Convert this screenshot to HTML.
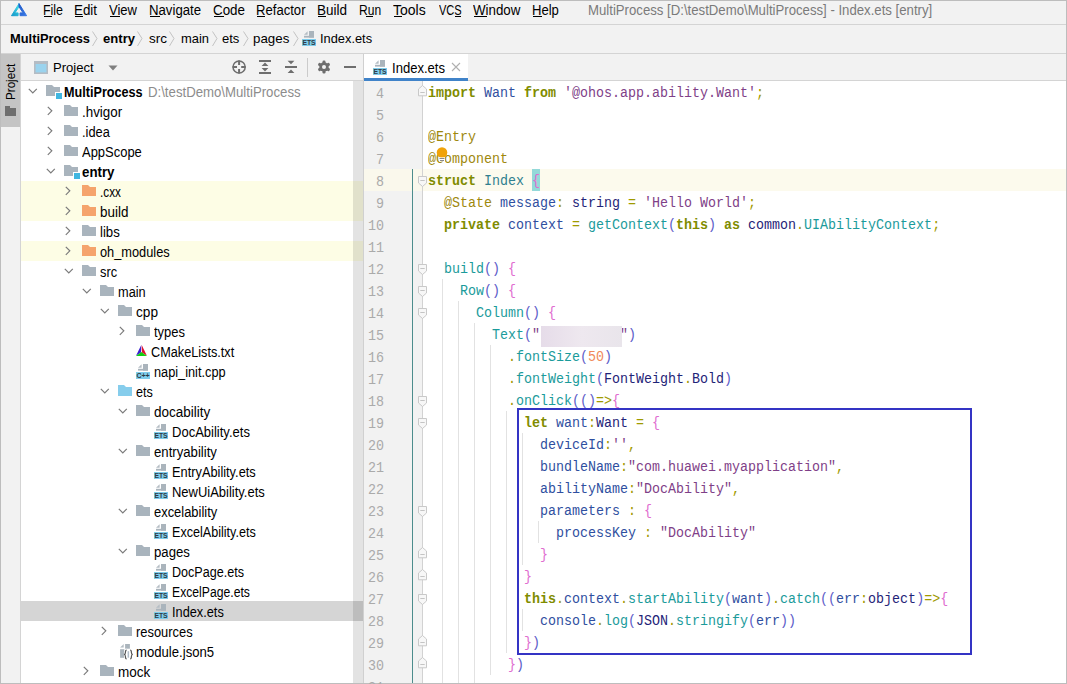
<!DOCTYPE html><html><head><meta charset="utf-8"><style>
html,body{margin:0;padding:0;}
body{width:1067px;height:684px;position:relative;overflow:hidden;background:#fff;font-family:'Liberation Sans', sans-serif;}
</style></head><body>
<div style="position:absolute;left:0px;top:0px;width:1067px;height:684px;background:#f2f2f2;"></div>
<div style="position:absolute;left:0px;top:0px;width:1067px;height:1px;background:#bdbdbd;"></div>
<div style="position:absolute;left:0px;top:0px;width:1px;height:684px;background:#bdbdbd;"></div>
<div style="position:absolute;left:1066px;top:0px;width:1px;height:684px;background:#bdbdbd;"></div>
<div style="position:absolute;left:0px;top:683px;width:1067px;height:1px;background:#bdbdbd;"></div>
<div style="position:absolute;left:1px;top:24px;width:1065px;height:1px;background:#d4d4d4;"></div>
<div style="position:absolute;left:1px;top:53px;width:1065px;height:1px;background:#d4d4d4;"></div>
<svg style="position:absolute;left:0;top:0" width="40" height="24">
<defs><linearGradient id="lg1" x1="0" y1="1" x2="0.6" y2="0"><stop offset="0" stop-color="#1296c8"/><stop offset="1" stop-color="#3fd8e6"/></linearGradient>
<linearGradient id="lg2" x1="0" y1="0" x2="1" y2="1"><stop offset="0" stop-color="#1d58c8"/><stop offset="1" stop-color="#3a7ae6"/></linearGradient></defs>
<path d="M19 3.6 L11.5 15.7 L18.1 15.7 L18.1 12.9 L14.9 12.9 L19 6.8 Z" fill="url(#lg1)" stroke="url(#lg1)" stroke-width="1" stroke-linejoin="round"/>
<path d="M19 3.6 L26.6 15.7 L20.1 15.7 L20.1 12.9 L23.1 12.9 L19 6.8 Z" fill="url(#lg2)" stroke="url(#lg2)" stroke-width="1" stroke-linejoin="round"/>
</svg>
<div style="position:absolute;left:43px;top:1.65px;font:400 14px/17px 'Liberation Sans', sans-serif;color:#000;white-space:pre;transform:scaleX(0.8864);transform-origin:0 0;">File</div>
<div style="position:absolute;left:74px;top:1.65px;font:400 14px/17px 'Liberation Sans', sans-serif;color:#000;white-space:pre;transform:scaleX(0.9534);transform-origin:0 0;">Edit</div>
<div style="position:absolute;left:109px;top:1.65px;font:400 14px/17px 'Liberation Sans', sans-serif;color:#000;white-space:pre;transform:scaleX(0.9304);transform-origin:0 0;">View</div>
<div style="position:absolute;left:148.5px;top:1.65px;font:400 14px/17px 'Liberation Sans', sans-serif;color:#000;white-space:pre;transform:scaleX(0.9427);transform-origin:0 0;">Navigate</div>
<div style="position:absolute;left:213px;top:1.65px;font:400 14px/17px 'Liberation Sans', sans-serif;color:#000;white-space:pre;transform:scaleX(0.9561);transform-origin:0 0;">Code</div>
<div style="position:absolute;left:256px;top:1.65px;font:400 14px/17px 'Liberation Sans', sans-serif;color:#000;white-space:pre;transform:scaleX(0.9353);transform-origin:0 0;">Refactor</div>
<div style="position:absolute;left:317px;top:1.65px;font:400 14px/17px 'Liberation Sans', sans-serif;color:#000;white-space:pre;transform:scaleX(0.9634);transform-origin:0 0;">Build</div>
<div style="position:absolute;left:358.7px;top:1.65px;font:400 14px/17px 'Liberation Sans', sans-serif;color:#000;white-space:pre;transform:scaleX(0.8603);transform-origin:0 0;">Run</div>
<div style="position:absolute;left:393px;top:1.65px;font:400 14px/17px 'Liberation Sans', sans-serif;color:#000;white-space:pre;transform:scaleX(1.0004);transform-origin:0 0;">Tools</div>
<div style="position:absolute;left:438.8px;top:1.65px;font:400 14px/17px 'Liberation Sans', sans-serif;color:#000;white-space:pre;transform:scaleX(0.7883);transform-origin:0 0;">VCS</div>
<div style="position:absolute;left:473.4px;top:1.65px;font:400 14px/17px 'Liberation Sans', sans-serif;color:#000;white-space:pre;transform:scaleX(0.9519);transform-origin:0 0;">Window</div>
<div style="position:absolute;left:532.4px;top:1.65px;font:400 14px/17px 'Liberation Sans', sans-serif;color:#000;white-space:pre;transform:scaleX(0.9341);transform-origin:0 0;">Help</div>
<div style="position:absolute;left:587.8px;top:1.65px;font:400 14px/17px 'Liberation Sans', sans-serif;color:#7a7a7a;white-space:pre;transform:scaleX(0.9413);transform-origin:0 0;">MultiProcess [D:\testDemo\MultiProcess] - Index.ets [entry]</div>
<div style="position:absolute;left:44px;top:16px;width:8px;height:1px;background:#000;"></div>
<div style="position:absolute;left:75px;top:16px;width:8px;height:1px;background:#000;"></div>
<div style="position:absolute;left:110px;top:16px;width:10px;height:1px;background:#000;"></div>
<div style="position:absolute;left:150px;top:16px;width:10px;height:1px;background:#000;"></div>
<div style="position:absolute;left:214px;top:16px;width:10px;height:1px;background:#000;"></div>
<div style="position:absolute;left:257px;top:16px;width:8px;height:1px;background:#000;"></div>
<div style="position:absolute;left:318px;top:16px;width:8px;height:1px;background:#000;"></div>
<div style="position:absolute;left:366px;top:16px;width:7px;height:1px;background:#000;"></div>
<div style="position:absolute;left:394px;top:16px;width:8px;height:1px;background:#000;"></div>
<div style="position:absolute;left:455px;top:16px;width:6px;height:1px;background:#000;"></div>
<div style="position:absolute;left:474px;top:16px;width:13px;height:1px;background:#000;"></div>
<div style="position:absolute;left:533px;top:16px;width:9px;height:1px;background:#000;"></div>
<div style="position:absolute;left:10px;top:31.32px;font:700 13.5px/16px 'Liberation Sans', sans-serif;color:#000;white-space:pre;transform:scaleX(0.9520);transform-origin:0 0;">MultiProcess</div>
<div style="position:absolute;left:103px;top:31.32px;font:700 13.5px/16px 'Liberation Sans', sans-serif;color:#000;white-space:pre;transform:scaleX(0.9692);transform-origin:0 0;">entry</div>
<div style="position:absolute;left:149px;top:31.32px;font:400 13.5px/16px 'Liberation Sans', sans-serif;color:#000;white-space:pre;transform:scaleX(1.0000);transform-origin:0 0;">src</div>
<div style="position:absolute;left:180.6px;top:31.32px;font:400 13.5px/16px 'Liberation Sans', sans-serif;color:#000;white-space:pre;transform:scaleX(0.9568);transform-origin:0 0;">main</div>
<div style="position:absolute;left:222.2px;top:31.32px;font:400 13.5px/16px 'Liberation Sans', sans-serif;color:#000;white-space:pre;transform:scaleX(0.9658);transform-origin:0 0;">ets</div>
<div style="position:absolute;left:253.3px;top:31.32px;font:400 13.5px/16px 'Liberation Sans', sans-serif;color:#000;white-space:pre;transform:scaleX(0.9865);transform-origin:0 0;">pages</div>
<div style="position:absolute;left:319.6px;top:31.32px;font:400 13.5px/16px 'Liberation Sans', sans-serif;color:#000;white-space:pre;transform:scaleX(0.9508);transform-origin:0 0;">Index.ets</div>
<svg style="position:absolute;left:92px;top:31px" width="6" height="16"><path d="M0.5 0.5 L5 7.5 L0.5 15" fill="none" stroke="#c3c3c3" stroke-width="1"/></svg>
<svg style="position:absolute;left:137px;top:31px" width="6" height="16"><path d="M0.5 0.5 L5 7.5 L0.5 15" fill="none" stroke="#c3c3c3" stroke-width="1"/></svg>
<svg style="position:absolute;left:169px;top:31px" width="6" height="16"><path d="M0.5 0.5 L5 7.5 L0.5 15" fill="none" stroke="#c3c3c3" stroke-width="1"/></svg>
<svg style="position:absolute;left:212px;top:31px" width="6" height="16"><path d="M0.5 0.5 L5 7.5 L0.5 15" fill="none" stroke="#c3c3c3" stroke-width="1"/></svg>
<svg style="position:absolute;left:243px;top:31px" width="6" height="16"><path d="M0.5 0.5 L5 7.5 L0.5 15" fill="none" stroke="#c3c3c3" stroke-width="1"/></svg>
<svg style="position:absolute;left:293px;top:31px" width="6" height="16"><path d="M0.5 0.5 L5 7.5 L0.5 15" fill="none" stroke="#c3c3c3" stroke-width="1"/></svg>
<svg style="position:absolute;left:302px;top:31px" width="14" height="15" viewBox="0 0 14 15">
<path d="M2 3.8 L5.6 0.2 V3.8 Z" fill="#b4bdc4"/><rect x="7" y="0" width="5" height="6.6" fill="#aab4bc"/><rect x="2" y="4.8" width="10" height="1.8" fill="#aab4bc"/>
<rect x="0" y="8" width="14" height="7" fill="#7fcdec"/>
<text x="7" y="14" font-family="Liberation Sans" font-size="6.8" font-weight="700" fill="#2f3b44" text-anchor="middle">ETS</text></svg>
<div style="position:absolute;left:1px;top:54px;width:19px;height:629px;background:#f2f2f2;"></div>
<div style="position:absolute;left:20px;top:54px;width:1px;height:629px;background:#d4d4d4;"></div>
<div style="position:absolute;left:1px;top:54px;width:19px;height:73px;background:#c4c4c4;"></div>
<div style="position:absolute;left:2.5px;top:100px;height:16px;transform:rotate(-90deg) scaleX(0.97);transform-origin:0 0;font:400 12px/16px 'Liberation Sans', sans-serif;color:#000;white-space:pre;width:40px">Project</div>
<div style="position:absolute;left:5px;top:108px;width:11px;height:8px;background:#6e6e6e;"></div>
<div style="position:absolute;left:5px;top:106px;width:5px;height:2px;background:#6e6e6e;"></div>
<div style="position:absolute;left:21px;top:80px;width:342px;height:1px;background:#d4d4d4;"></div>
<svg style="position:absolute;left:34px;top:61px" width="14" height="13"><rect x="0" y="0" width="14" height="13" fill="#b4bcc4"/><rect x="1.6" y="3" width="10.8" height="8.4" fill="#9ad3ee"/></svg>
<div style="position:absolute;left:52.5px;top:59.80px;font:400 13px/16px 'Liberation Sans', sans-serif;color:#000;white-space:pre;transform:scaleX(1.0057);transform-origin:0 0;">Project</div>
<svg style="position:absolute;left:108px;top:65px" width="10" height="6"><path d="M0.5 0.5 H9.5 L5 5.5 Z" fill="#7f7f7f"/></svg>
<svg style="position:absolute;left:230px;top:58px" width="134" height="20">
<circle cx="9.1" cy="9" r="6.1" fill="none" stroke="#6e6e6e" stroke-width="1.5"/>
<path d="M2.6 9 H7 M11.2 9 H15.6 M9.1 2.5 V6.9 M9.1 11.1 V15.5" stroke="#6e6e6e" stroke-width="2"/>
<rect x="29" y="2" width="12" height="2" fill="#6e6e6e"/><rect x="29" y="14" width="12" height="2" fill="#6e6e6e"/>
<path d="M31.6 8 L35 4.6 L38.4 8 Z M31.6 10 L35 13.4 L38.4 10 Z" fill="#6e6e6e"/>
<rect x="55" y="8" width="12" height="2" fill="#6e6e6e"/>
<path d="M57.6 2.8 H64.4 L61 6.3 Z M57.6 15 H64.4 L61 11.6 Z" fill="#6e6e6e"/>
<rect x="77" y="-1" width="1" height="20" fill="#cbcbcb"/>
<g transform="translate(94,9)" fill="#6e6e6e">
<circle r="4.7"/>
<rect x="-1.5" y="-6.5" width="3" height="13" rx="1.2"/>
<rect x="-1.5" y="-6.5" width="3" height="13" rx="1.2" transform="rotate(60)"/>
<rect x="-1.5" y="-6.5" width="3" height="13" rx="1.2" transform="rotate(120)"/>
<circle r="2" fill="#f2f2f2"/>
</g>
<rect x="114" y="8" width="12" height="2" fill="#6e6e6e"/>
</svg>
<div style="position:absolute;left:21px;top:81px;width:342px;height:602px;background:#ffffff;"></div>
<div style="position:absolute;left:21px;top:181px;width:342px;height:20px;background:#fdfde5;"></div>
<div style="position:absolute;left:21px;top:201px;width:342px;height:20px;background:#fdfde5;"></div>
<div style="position:absolute;left:21px;top:241px;width:342px;height:20px;background:#fdfde5;"></div>
<div style="position:absolute;left:21px;top:601px;width:342px;height:20px;background:#d5d5d5;"></div>
<div style="position:absolute;left:353px;top:81px;width:10px;height:602px;background:rgba(0,0,0,0.11);"></div>
<div style="position:absolute;left:363px;top:54px;width:1px;height:629px;background:#d0d0d0;"></div>
<svg style="position:absolute;left:28px;top:88px" width="10" height="6"><path d="M0.8 0.8 L4.8 4.8 L8.8 0.8" fill="none" stroke="#7a7a7a" stroke-width="1.2"/></svg>
<svg style="position:absolute;left:46px;top:85px" width="16" height="14"><path d="M0 0 H6 L8 2 H14 V11 H0 Z" fill="#a9b4bd"/><rect x="9" y="7" width="7" height="7" fill="#fff"/><rect x="10" y="8" width="6" height="6" fill="#40b6e0"/></svg>
<div style="position:absolute;left:63.8px;top:83.85px;font:700 14px/17px 'Liberation Sans', sans-serif;color:#000;white-space:pre;transform:scaleX(0.9020);transform-origin:0 0;">MultiProcess</div>
<svg style="position:absolute;left:47px;top:106px" width="6" height="10"><path d="M0.8 0.8 L4.8 4.8 L0.8 8.8" fill="none" stroke="#7a7a7a" stroke-width="1.2"/></svg>
<svg style="position:absolute;left:64px;top:105px" width="16" height="14"><path d="M0 0 H6 L8 2 H14 V11 H0 Z" fill="#a9b4bd"/></svg>
<div style="position:absolute;left:81.8px;top:103.85px;font:400 14px/17px 'Liberation Sans', sans-serif;color:#000;white-space:pre;transform:scaleX(0.9541);transform-origin:0 0;">.hvigor</div>
<svg style="position:absolute;left:47px;top:126px" width="6" height="10"><path d="M0.8 0.8 L4.8 4.8 L0.8 8.8" fill="none" stroke="#7a7a7a" stroke-width="1.2"/></svg>
<svg style="position:absolute;left:64px;top:125px" width="16" height="14"><path d="M0 0 H6 L8 2 H14 V11 H0 Z" fill="#a9b4bd"/></svg>
<div style="position:absolute;left:81.8px;top:123.85px;font:400 14px/17px 'Liberation Sans', sans-serif;color:#000;white-space:pre;transform:scaleX(0.9157);transform-origin:0 0;">.idea</div>
<svg style="position:absolute;left:47px;top:146px" width="6" height="10"><path d="M0.8 0.8 L4.8 4.8 L0.8 8.8" fill="none" stroke="#7a7a7a" stroke-width="1.2"/></svg>
<svg style="position:absolute;left:64px;top:145px" width="16" height="14"><path d="M0 0 H6 L8 2 H14 V11 H0 Z" fill="#a9b4bd"/></svg>
<div style="position:absolute;left:81.8px;top:143.85px;font:400 14px/17px 'Liberation Sans', sans-serif;color:#000;white-space:pre;transform:scaleX(0.9256);transform-origin:0 0;">AppScope</div>
<svg style="position:absolute;left:46px;top:168px" width="10" height="6"><path d="M0.8 0.8 L4.8 4.8 L8.8 0.8" fill="none" stroke="#7a7a7a" stroke-width="1.2"/></svg>
<svg style="position:absolute;left:64px;top:165px" width="16" height="14"><path d="M0 0 H6 L8 2 H14 V11 H0 Z" fill="#a9b4bd"/><rect x="9" y="7" width="7" height="7" fill="#fff"/><rect x="10" y="8" width="6" height="6" fill="#40b6e0"/></svg>
<div style="position:absolute;left:81.8px;top:163.85px;font:700 14px/17px 'Liberation Sans', sans-serif;color:#000;white-space:pre;transform:scaleX(0.9493);transform-origin:0 0;">entry</div>
<svg style="position:absolute;left:65px;top:186px" width="6" height="10"><path d="M0.8 0.8 L4.8 4.8 L0.8 8.8" fill="none" stroke="#7a7a7a" stroke-width="1.2"/></svg>
<svg style="position:absolute;left:82px;top:185px" width="16" height="14"><path d="M0 0 H6 L8 2 H14 V11 H0 Z" fill="#f5a46c"/></svg>
<div style="position:absolute;left:99.8px;top:183.85px;font:400 14px/17px 'Liberation Sans', sans-serif;color:#000;white-space:pre;transform:scaleX(0.8397);transform-origin:0 0;">.cxx</div>
<svg style="position:absolute;left:65px;top:206px" width="6" height="10"><path d="M0.8 0.8 L4.8 4.8 L0.8 8.8" fill="none" stroke="#7a7a7a" stroke-width="1.2"/></svg>
<svg style="position:absolute;left:82px;top:205px" width="16" height="14"><path d="M0 0 H6 L8 2 H14 V11 H0 Z" fill="#f5a46c"/></svg>
<div style="position:absolute;left:99.8px;top:203.85px;font:400 14px/17px 'Liberation Sans', sans-serif;color:#000;white-space:pre;transform:scaleX(0.9597);transform-origin:0 0;">build</div>
<svg style="position:absolute;left:65px;top:226px" width="6" height="10"><path d="M0.8 0.8 L4.8 4.8 L0.8 8.8" fill="none" stroke="#7a7a7a" stroke-width="1.2"/></svg>
<svg style="position:absolute;left:82px;top:225px" width="16" height="14"><path d="M0 0 H6 L8 2 H14 V11 H0 Z" fill="#a9b4bd"/></svg>
<div style="position:absolute;left:99.8px;top:223.85px;font:400 14px/17px 'Liberation Sans', sans-serif;color:#000;white-space:pre;transform:scaleX(0.9422);transform-origin:0 0;">libs</div>
<svg style="position:absolute;left:65px;top:246px" width="6" height="10"><path d="M0.8 0.8 L4.8 4.8 L0.8 8.8" fill="none" stroke="#7a7a7a" stroke-width="1.2"/></svg>
<svg style="position:absolute;left:82px;top:245px" width="16" height="14"><path d="M0 0 H6 L8 2 H14 V11 H0 Z" fill="#f5a46c"/></svg>
<div style="position:absolute;left:99.8px;top:243.85px;font:400 14px/17px 'Liberation Sans', sans-serif;color:#000;white-space:pre;transform:scaleX(0.9137);transform-origin:0 0;">oh_modules</div>
<svg style="position:absolute;left:64px;top:268px" width="10" height="6"><path d="M0.8 0.8 L4.8 4.8 L8.8 0.8" fill="none" stroke="#7a7a7a" stroke-width="1.2"/></svg>
<svg style="position:absolute;left:82px;top:265px" width="16" height="14"><path d="M0 0 H6 L8 2 H14 V11 H0 Z" fill="#a9b4bd"/></svg>
<div style="position:absolute;left:99.8px;top:263.85px;font:400 14px/17px 'Liberation Sans', sans-serif;color:#000;white-space:pre;transform:scaleX(0.9158);transform-origin:0 0;">src</div>
<svg style="position:absolute;left:82px;top:288px" width="10" height="6"><path d="M0.8 0.8 L4.8 4.8 L8.8 0.8" fill="none" stroke="#7a7a7a" stroke-width="1.2"/></svg>
<svg style="position:absolute;left:100px;top:285px" width="16" height="14"><path d="M0 0 H6 L8 2 H14 V11 H0 Z" fill="#a9b4bd"/></svg>
<div style="position:absolute;left:117.8px;top:283.85px;font:400 14px/17px 'Liberation Sans', sans-serif;color:#000;white-space:pre;transform:scaleX(0.9124);transform-origin:0 0;">main</div>
<svg style="position:absolute;left:100px;top:308px" width="10" height="6"><path d="M0.8 0.8 L4.8 4.8 L8.8 0.8" fill="none" stroke="#7a7a7a" stroke-width="1.2"/></svg>
<svg style="position:absolute;left:118px;top:305px" width="16" height="14"><path d="M0 0 H6 L8 2 H14 V11 H0 Z" fill="#a9b4bd"/></svg>
<div style="position:absolute;left:135.8px;top:303.85px;font:400 14px/17px 'Liberation Sans', sans-serif;color:#000;white-space:pre;transform:scaleX(0.9744);transform-origin:0 0;">cpp</div>
<svg style="position:absolute;left:119px;top:326px" width="6" height="10"><path d="M0.8 0.8 L4.8 4.8 L0.8 8.8" fill="none" stroke="#7a7a7a" stroke-width="1.2"/></svg>
<svg style="position:absolute;left:136px;top:325px" width="16" height="14"><path d="M0 0 H6 L8 2 H14 V11 H0 Z" fill="#a9b4bd"/></svg>
<div style="position:absolute;left:153.8px;top:323.85px;font:400 14px/17px 'Liberation Sans', sans-serif;color:#000;white-space:pre;transform:scaleX(0.9262);transform-origin:0 0;">types</div>
<svg style="position:absolute;left:136px;top:345px" width="12" height="12" viewBox="0 0 12 12">
<path d="M5.3 0 L0 10.8 L5.0 7.4 Z" fill="#3a1fd0"/><path d="M5.7 0 L10.9 10.8 L5.9 7.4 Z" fill="#e01030"/><path d="M0 10.9 L5.4 7.0 L10.9 10.9 Z" fill="#10d010"/></svg>
<div style="position:absolute;left:150.8px;top:343.85px;font:400 14px/17px 'Liberation Sans', sans-serif;color:#000;white-space:pre;transform:scaleX(0.9062);transform-origin:0 0;">CMakeLists.txt</div>
<svg style="position:absolute;left:136px;top:364px" width="14" height="15" viewBox="0 0 14 15">
<path d="M2 3.8 L5.6 0.2 V3.8 Z" fill="#b4bdc4"/><rect x="7" y="0" width="5" height="6.6" fill="#aab4bc"/><rect x="2" y="4.8" width="10" height="1.8" fill="#aab4bc"/>
<rect x="0" y="8" width="14" height="7" fill="#7fcdec"/>
<text x="7" y="14" font-family="Liberation Sans" font-size="7" font-weight="700" fill="#2f3b44" text-anchor="middle">C++</text></svg>
<div style="position:absolute;left:153.8px;top:363.85px;font:400 14px/17px 'Liberation Sans', sans-serif;color:#000;white-space:pre;transform:scaleX(0.9107);transform-origin:0 0;">napi_init.cpp</div>
<svg style="position:absolute;left:100px;top:388px" width="10" height="6"><path d="M0.8 0.8 L4.8 4.8 L8.8 0.8" fill="none" stroke="#7a7a7a" stroke-width="1.2"/></svg>
<svg style="position:absolute;left:118px;top:385px" width="16" height="14"><path d="M0 0 H6 L8 2 H14 V11 H0 Z" fill="#86cdec"/></svg>
<div style="position:absolute;left:135.8px;top:383.85px;font:400 14px/17px 'Liberation Sans', sans-serif;color:#000;white-space:pre;transform:scaleX(0.8990);transform-origin:0 0;">ets</div>
<svg style="position:absolute;left:118px;top:408px" width="10" height="6"><path d="M0.8 0.8 L4.8 4.8 L8.8 0.8" fill="none" stroke="#7a7a7a" stroke-width="1.2"/></svg>
<svg style="position:absolute;left:136px;top:405px" width="16" height="14"><path d="M0 0 H6 L8 2 H14 V11 H0 Z" fill="#a9b4bd"/></svg>
<div style="position:absolute;left:153.8px;top:403.85px;font:400 14px/17px 'Liberation Sans', sans-serif;color:#000;white-space:pre;transform:scaleX(0.9645);transform-origin:0 0;">docability</div>
<svg style="position:absolute;left:154px;top:424px" width="14" height="15" viewBox="0 0 14 15">
<path d="M2 3.8 L5.6 0.2 V3.8 Z" fill="#b4bdc4"/><rect x="7" y="0" width="5" height="6.6" fill="#aab4bc"/><rect x="2" y="4.8" width="10" height="1.8" fill="#aab4bc"/>
<rect x="0" y="8" width="14" height="7" fill="#7fcdec"/>
<text x="7" y="14" font-family="Liberation Sans" font-size="6.8" font-weight="700" fill="#2f3b44" text-anchor="middle">ETS</text></svg>
<div style="position:absolute;left:171.8px;top:423.85px;font:400 14px/17px 'Liberation Sans', sans-serif;color:#000;white-space:pre;transform:scaleX(0.9298);transform-origin:0 0;">DocAbility.ets</div>
<svg style="position:absolute;left:118px;top:448px" width="10" height="6"><path d="M0.8 0.8 L4.8 4.8 L8.8 0.8" fill="none" stroke="#7a7a7a" stroke-width="1.2"/></svg>
<svg style="position:absolute;left:136px;top:445px" width="16" height="14"><path d="M0 0 H6 L8 2 H14 V11 H0 Z" fill="#a9b4bd"/></svg>
<div style="position:absolute;left:153.8px;top:443.85px;font:400 14px/17px 'Liberation Sans', sans-serif;color:#000;white-space:pre;transform:scaleX(0.9399);transform-origin:0 0;">entryability</div>
<svg style="position:absolute;left:154px;top:464px" width="14" height="15" viewBox="0 0 14 15">
<path d="M2 3.8 L5.6 0.2 V3.8 Z" fill="#b4bdc4"/><rect x="7" y="0" width="5" height="6.6" fill="#aab4bc"/><rect x="2" y="4.8" width="10" height="1.8" fill="#aab4bc"/>
<rect x="0" y="8" width="14" height="7" fill="#7fcdec"/>
<text x="7" y="14" font-family="Liberation Sans" font-size="6.8" font-weight="700" fill="#2f3b44" text-anchor="middle">ETS</text></svg>
<div style="position:absolute;left:171.8px;top:463.85px;font:400 14px/17px 'Liberation Sans', sans-serif;color:#000;white-space:pre;transform:scaleX(0.9143);transform-origin:0 0;">EntryAbility.ets</div>
<svg style="position:absolute;left:154px;top:484px" width="14" height="15" viewBox="0 0 14 15">
<path d="M2 3.8 L5.6 0.2 V3.8 Z" fill="#b4bdc4"/><rect x="7" y="0" width="5" height="6.6" fill="#aab4bc"/><rect x="2" y="4.8" width="10" height="1.8" fill="#aab4bc"/>
<rect x="0" y="8" width="14" height="7" fill="#7fcdec"/>
<text x="7" y="14" font-family="Liberation Sans" font-size="6.8" font-weight="700" fill="#2f3b44" text-anchor="middle">ETS</text></svg>
<div style="position:absolute;left:171.8px;top:483.85px;font:400 14px/17px 'Liberation Sans', sans-serif;color:#000;white-space:pre;transform:scaleX(0.9270);transform-origin:0 0;">NewUiAbility.ets</div>
<svg style="position:absolute;left:118px;top:508px" width="10" height="6"><path d="M0.8 0.8 L4.8 4.8 L8.8 0.8" fill="none" stroke="#7a7a7a" stroke-width="1.2"/></svg>
<svg style="position:absolute;left:136px;top:505px" width="16" height="14"><path d="M0 0 H6 L8 2 H14 V11 H0 Z" fill="#a9b4bd"/></svg>
<div style="position:absolute;left:153.8px;top:503.85px;font:400 14px/17px 'Liberation Sans', sans-serif;color:#000;white-space:pre;transform:scaleX(0.9228);transform-origin:0 0;">excelability</div>
<svg style="position:absolute;left:154px;top:524px" width="14" height="15" viewBox="0 0 14 15">
<path d="M2 3.8 L5.6 0.2 V3.8 Z" fill="#b4bdc4"/><rect x="7" y="0" width="5" height="6.6" fill="#aab4bc"/><rect x="2" y="4.8" width="10" height="1.8" fill="#aab4bc"/>
<rect x="0" y="8" width="14" height="7" fill="#7fcdec"/>
<text x="7" y="14" font-family="Liberation Sans" font-size="6.8" font-weight="700" fill="#2f3b44" text-anchor="middle">ETS</text></svg>
<div style="position:absolute;left:171.8px;top:523.85px;font:400 14px/17px 'Liberation Sans', sans-serif;color:#000;white-space:pre;transform:scaleX(0.8989);transform-origin:0 0;">ExcelAbility.ets</div>
<svg style="position:absolute;left:118px;top:548px" width="10" height="6"><path d="M0.8 0.8 L4.8 4.8 L8.8 0.8" fill="none" stroke="#7a7a7a" stroke-width="1.2"/></svg>
<svg style="position:absolute;left:136px;top:545px" width="16" height="14"><path d="M0 0 H6 L8 2 H14 V11 H0 Z" fill="#a9b4bd"/></svg>
<div style="position:absolute;left:153.8px;top:543.85px;font:400 14px/17px 'Liberation Sans', sans-serif;color:#000;white-space:pre;transform:scaleX(0.9409);transform-origin:0 0;">pages</div>
<svg style="position:absolute;left:154px;top:564px" width="14" height="15" viewBox="0 0 14 15">
<path d="M2 3.8 L5.6 0.2 V3.8 Z" fill="#b4bdc4"/><rect x="7" y="0" width="5" height="6.6" fill="#aab4bc"/><rect x="2" y="4.8" width="10" height="1.8" fill="#aab4bc"/>
<rect x="0" y="8" width="14" height="7" fill="#7fcdec"/>
<text x="7" y="14" font-family="Liberation Sans" font-size="6.8" font-weight="700" fill="#2f3b44" text-anchor="middle">ETS</text></svg>
<div style="position:absolute;left:171.8px;top:563.85px;font:400 14px/17px 'Liberation Sans', sans-serif;color:#000;white-space:pre;transform:scaleX(0.8981);transform-origin:0 0;">DocPage.ets</div>
<svg style="position:absolute;left:154px;top:584px" width="14" height="15" viewBox="0 0 14 15">
<path d="M2 3.8 L5.6 0.2 V3.8 Z" fill="#b4bdc4"/><rect x="7" y="0" width="5" height="6.6" fill="#aab4bc"/><rect x="2" y="4.8" width="10" height="1.8" fill="#aab4bc"/>
<rect x="0" y="8" width="14" height="7" fill="#7fcdec"/>
<text x="7" y="14" font-family="Liberation Sans" font-size="6.8" font-weight="700" fill="#2f3b44" text-anchor="middle">ETS</text></svg>
<div style="position:absolute;left:171.8px;top:583.85px;font:400 14px/17px 'Liberation Sans', sans-serif;color:#000;white-space:pre;transform:scaleX(0.8704);transform-origin:0 0;">ExcelPage.ets</div>
<svg style="position:absolute;left:154px;top:604px" width="14" height="15" viewBox="0 0 14 15">
<path d="M2 3.8 L5.6 0.2 V3.8 Z" fill="#b4bdc4"/><rect x="7" y="0" width="5" height="6.6" fill="#aab4bc"/><rect x="2" y="4.8" width="10" height="1.8" fill="#aab4bc"/>
<rect x="0" y="8" width="14" height="7" fill="#7fcdec"/>
<text x="7" y="14" font-family="Liberation Sans" font-size="6.8" font-weight="700" fill="#2f3b44" text-anchor="middle">ETS</text></svg>
<div style="position:absolute;left:171.8px;top:603.85px;font:400 14px/17px 'Liberation Sans', sans-serif;color:#000;white-space:pre;transform:scaleX(0.9115);transform-origin:0 0;">Index.ets</div>
<svg style="position:absolute;left:101px;top:626px" width="6" height="10"><path d="M0.8 0.8 L4.8 4.8 L0.8 8.8" fill="none" stroke="#7a7a7a" stroke-width="1.2"/></svg>
<svg style="position:absolute;left:118px;top:625px" width="16" height="14"><path d="M0 0 H6 L8 2 H14 V11 H0 Z" fill="#a9b4bd"/></svg>
<div style="position:absolute;left:135.8px;top:623.85px;font:400 14px/17px 'Liberation Sans', sans-serif;color:#000;white-space:pre;transform:scaleX(0.9208);transform-origin:0 0;">resources</div>
<svg style="position:absolute;left:118px;top:642px" width="18" height="18" viewBox="0 0 18 18">
<path d="M2.1 5.6 L5.7 2 V5.6 Z" fill="#b4bdc4"/><rect x="7.1" y="2" width="4.8" height="4.7" fill="#aab4bc"/><rect x="2.1" y="7.2" width="4.3" height="8.6" fill="#aab4bc"/>
<path d="M8.6 8.2 C7.4 8.2 7.4 9.2 7.4 10.6 C7.4 11.8 7 12.5 6 12.5 C7 12.5 7.4 13.2 7.4 14.4 C7.4 15.8 7.4 16.8 8.6 16.8 M12.2 8.2 C13.4 8.2 13.4 9.2 13.4 10.6 C13.4 11.8 13.8 12.5 14.8 12.5 C13.8 12.5 13.4 13.2 13.4 14.4 C13.4 15.8 13.4 16.8 12.2 16.8" fill="none" stroke="#fff" stroke-width="3"/>
<rect x="9.6" y="9.2" width="1.5" height="6.5" fill="#b0bcc8"/>
<path d="M8.6 8.2 C7.4 8.2 7.4 9.2 7.4 10.6 C7.4 11.8 7 12.5 6 12.5 C7 12.5 7.4 13.2 7.4 14.4 C7.4 15.8 7.4 16.8 8.6 16.8 M12.2 8.2 C13.4 8.2 13.4 9.2 13.4 10.6 C13.4 11.8 13.8 12.5 14.8 12.5 C13.8 12.5 13.4 13.2 13.4 14.4 C13.4 15.8 13.4 16.8 12.2 16.8" fill="none" stroke="#555" stroke-width="1.2"/></svg>
<div style="position:absolute;left:135.8px;top:643.85px;font:400 14px/17px 'Liberation Sans', sans-serif;color:#000;white-space:pre;transform:scaleX(0.9378);transform-origin:0 0;">module.json5</div>
<svg style="position:absolute;left:83px;top:666px" width="6" height="10"><path d="M0.8 0.8 L4.8 4.8 L0.8 8.8" fill="none" stroke="#7a7a7a" stroke-width="1.2"/></svg>
<svg style="position:absolute;left:100px;top:665px" width="16" height="14"><path d="M0 0 H6 L8 2 H14 V11 H0 Z" fill="#a9b4bd"/></svg>
<div style="position:absolute;left:117.8px;top:663.85px;font:400 14px/17px 'Liberation Sans', sans-serif;color:#000;white-space:pre;transform:scaleX(0.9655);transform-origin:0 0;">mock</div>
<div style="position:absolute;left:148px;top:83.85px;font:400 14px/17px 'Liberation Sans', sans-serif;color:#8c8c8c;white-space:pre;transform:scaleX(0.9430);transform-origin:0 0;">D:\testDemo\MultiProcess</div>
<div style="position:absolute;left:364px;top:54px;width:702px;height:26px;background:#f2f2f2;"></div>
<div style="position:absolute;left:364px;top:80px;width:702px;height:1px;background:#d4d4d4;"></div>
<div style="position:absolute;left:364px;top:54px;width:104px;height:24px;background:#ffffff;"></div>
<div style="position:absolute;left:364px;top:78px;width:104px;height:3px;background:#4083c9;"></div>
<div style="position:absolute;left:364px;top:81px;width:702px;height:602px;background:#ffffff;"></div>
<div style="position:absolute;left:364px;top:81px;width:58px;height:602px;background:#f2f2f2;"></div>
<div style="position:absolute;left:422px;top:81px;width:1px;height:602px;background:#d2d2d2;"></div>
<div style="position:absolute;left:364px;top:169px;width:58px;height:22px;background:#faf8ec;"></div>
<div style="position:absolute;left:423px;top:169px;width:643px;height:22px;background:#fcfaed;"></div>
<div style="position:absolute;left:532px;top:169px;width:8px;height:22px;background:#93d9d9;"></div>
<div style="position:absolute;left:412px;top:169px;width:1px;height:514px;background:#4c8c8c;"></div>
<div style="position:absolute;left:442px;top:279px;width:1px;height:404px;background:#e2e2e2;"></div>
<div style="position:absolute;left:458px;top:301px;width:1px;height:382px;background:#e2e2e2;"></div>
<div style="position:absolute;left:474px;top:323px;width:1px;height:360px;background:#e2e2e2;"></div>
<div style="position:absolute;left:490px;top:345px;width:1px;height:330px;background:#e2e2e2;"></div>
<div style="position:absolute;left:506px;top:411px;width:1px;height:242px;background:#e2e2e2;"></div>
<div style="position:absolute;left:522px;top:433px;width:1px;height:132px;background:#e2e2e2;"></div>
<div style="position:absolute;left:538px;top:521px;width:1px;height:22px;background:#e2e2e2;"></div>
<div style="position:absolute;left:522px;top:609px;width:1px;height:22px;background:#e2e2e2;"></div>
<svg style="position:absolute;left:418px;top:85px" width="10" height="12"><path d="M0.5 10.8 V4 L4.5 0.5 L8.5 4 V10.8 Z" fill="#f7f7f7" stroke="#c9c9c9" stroke-width="1"/><path d="M2.3 7.5 H6.7" stroke="#c4c4c4" stroke-width="1"/></svg>
<svg style="position:absolute;left:418px;top:176px" width="10" height="12"><path d="M0.5 0.5 H8.5 V7 L4.5 10.5 L0.5 7 Z" fill="#f7f7f7" stroke="#c9c9c9" stroke-width="1"/><path d="M2.3 4.5 H6.7" stroke="#c4c4c4" stroke-width="1"/></svg>
<svg style="position:absolute;left:418px;top:264px" width="10" height="12"><path d="M0.5 0.5 H8.5 V7 L4.5 10.5 L0.5 7 Z" fill="#f7f7f7" stroke="#c9c9c9" stroke-width="1"/><path d="M2.3 4.5 H6.7" stroke="#c4c4c4" stroke-width="1"/></svg>
<svg style="position:absolute;left:418px;top:286px" width="10" height="12"><path d="M0.5 0.5 H8.5 V7 L4.5 10.5 L0.5 7 Z" fill="#f7f7f7" stroke="#c9c9c9" stroke-width="1"/><path d="M2.3 4.5 H6.7" stroke="#c4c4c4" stroke-width="1"/></svg>
<svg style="position:absolute;left:418px;top:308px" width="10" height="12"><path d="M0.5 0.5 H8.5 V7 L4.5 10.5 L0.5 7 Z" fill="#f7f7f7" stroke="#c9c9c9" stroke-width="1"/><path d="M2.3 4.5 H6.7" stroke="#c4c4c4" stroke-width="1"/></svg>
<svg style="position:absolute;left:418px;top:396px" width="10" height="12"><path d="M0.5 0.5 H8.5 V7 L4.5 10.5 L0.5 7 Z" fill="#f7f7f7" stroke="#c9c9c9" stroke-width="1"/><path d="M2.3 4.5 H6.7" stroke="#c4c4c4" stroke-width="1"/></svg>
<svg style="position:absolute;left:418px;top:418px" width="10" height="12"><path d="M0.5 0.5 H8.5 V7 L4.5 10.5 L0.5 7 Z" fill="#f7f7f7" stroke="#c9c9c9" stroke-width="1"/><path d="M2.3 4.5 H6.7" stroke="#c4c4c4" stroke-width="1"/></svg>
<svg style="position:absolute;left:418px;top:506px" width="10" height="12"><path d="M0.5 0.5 H8.5 V7 L4.5 10.5 L0.5 7 Z" fill="#f7f7f7" stroke="#c9c9c9" stroke-width="1"/><path d="M2.3 4.5 H6.7" stroke="#c4c4c4" stroke-width="1"/></svg>
<svg style="position:absolute;left:418px;top:547px" width="10" height="12"><path d="M0.5 10.8 V4 L4.5 0.5 L8.5 4 V10.8 Z" fill="#f7f7f7" stroke="#c9c9c9" stroke-width="1"/><path d="M2.3 7.5 H6.7" stroke="#c4c4c4" stroke-width="1"/></svg>
<svg style="position:absolute;left:418px;top:569px" width="10" height="12"><path d="M0.5 10.8 V4 L4.5 0.5 L8.5 4 V10.8 Z" fill="#f7f7f7" stroke="#c9c9c9" stroke-width="1"/><path d="M2.3 7.5 H6.7" stroke="#c4c4c4" stroke-width="1"/></svg>
<svg style="position:absolute;left:418px;top:594px" width="10" height="12"><path d="M0.5 0.5 H8.5 V7 L4.5 10.5 L0.5 7 Z" fill="#f7f7f7" stroke="#c9c9c9" stroke-width="1"/><path d="M2.3 4.5 H6.7" stroke="#c4c4c4" stroke-width="1"/></svg>
<svg style="position:absolute;left:418px;top:635px" width="10" height="12"><path d="M0.5 10.8 V4 L4.5 0.5 L8.5 4 V10.8 Z" fill="#f7f7f7" stroke="#c9c9c9" stroke-width="1"/><path d="M2.3 7.5 H6.7" stroke="#c4c4c4" stroke-width="1"/></svg>
<svg style="position:absolute;left:418px;top:657px" width="10" height="12"><path d="M0.5 10.8 V4 L4.5 0.5 L8.5 4 V10.8 Z" fill="#f7f7f7" stroke="#c9c9c9" stroke-width="1"/><path d="M2.3 7.5 H6.7" stroke="#c4c4c4" stroke-width="1"/></svg>
<div style="position:absolute;left:364px;top:83px;width:20px;text-align:right;font:400 14.5px/22px 'Liberation Mono', monospace;color:#aaaaaa;transform:scaleX(0.9195);transform-origin:100% 0">4</div>
<div style="position:absolute;left:364px;top:105px;width:20px;text-align:right;font:400 14.5px/22px 'Liberation Mono', monospace;color:#aaaaaa;transform:scaleX(0.9195);transform-origin:100% 0">5</div>
<div style="position:absolute;left:364px;top:127px;width:20px;text-align:right;font:400 14.5px/22px 'Liberation Mono', monospace;color:#aaaaaa;transform:scaleX(0.9195);transform-origin:100% 0">6</div>
<div style="position:absolute;left:364px;top:149px;width:20px;text-align:right;font:400 14.5px/22px 'Liberation Mono', monospace;color:#aaaaaa;transform:scaleX(0.9195);transform-origin:100% 0">7</div>
<div style="position:absolute;left:364px;top:171px;width:20px;text-align:right;font:400 14.5px/22px 'Liberation Mono', monospace;color:#aaaaaa;transform:scaleX(0.9195);transform-origin:100% 0">8</div>
<div style="position:absolute;left:364px;top:193px;width:20px;text-align:right;font:400 14.5px/22px 'Liberation Mono', monospace;color:#aaaaaa;transform:scaleX(0.9195);transform-origin:100% 0">9</div>
<div style="position:absolute;left:364px;top:215px;width:20px;text-align:right;font:400 14.5px/22px 'Liberation Mono', monospace;color:#aaaaaa;transform:scaleX(0.9195);transform-origin:100% 0">10</div>
<div style="position:absolute;left:364px;top:237px;width:20px;text-align:right;font:400 14.5px/22px 'Liberation Mono', monospace;color:#aaaaaa;transform:scaleX(0.9195);transform-origin:100% 0">11</div>
<div style="position:absolute;left:364px;top:259px;width:20px;text-align:right;font:400 14.5px/22px 'Liberation Mono', monospace;color:#aaaaaa;transform:scaleX(0.9195);transform-origin:100% 0">12</div>
<div style="position:absolute;left:364px;top:281px;width:20px;text-align:right;font:400 14.5px/22px 'Liberation Mono', monospace;color:#aaaaaa;transform:scaleX(0.9195);transform-origin:100% 0">13</div>
<div style="position:absolute;left:364px;top:303px;width:20px;text-align:right;font:400 14.5px/22px 'Liberation Mono', monospace;color:#aaaaaa;transform:scaleX(0.9195);transform-origin:100% 0">14</div>
<div style="position:absolute;left:364px;top:325px;width:20px;text-align:right;font:400 14.5px/22px 'Liberation Mono', monospace;color:#aaaaaa;transform:scaleX(0.9195);transform-origin:100% 0">15</div>
<div style="position:absolute;left:364px;top:347px;width:20px;text-align:right;font:400 14.5px/22px 'Liberation Mono', monospace;color:#aaaaaa;transform:scaleX(0.9195);transform-origin:100% 0">16</div>
<div style="position:absolute;left:364px;top:369px;width:20px;text-align:right;font:400 14.5px/22px 'Liberation Mono', monospace;color:#aaaaaa;transform:scaleX(0.9195);transform-origin:100% 0">17</div>
<div style="position:absolute;left:364px;top:391px;width:20px;text-align:right;font:400 14.5px/22px 'Liberation Mono', monospace;color:#aaaaaa;transform:scaleX(0.9195);transform-origin:100% 0">18</div>
<div style="position:absolute;left:364px;top:413px;width:20px;text-align:right;font:400 14.5px/22px 'Liberation Mono', monospace;color:#aaaaaa;transform:scaleX(0.9195);transform-origin:100% 0">19</div>
<div style="position:absolute;left:364px;top:435px;width:20px;text-align:right;font:400 14.5px/22px 'Liberation Mono', monospace;color:#aaaaaa;transform:scaleX(0.9195);transform-origin:100% 0">20</div>
<div style="position:absolute;left:364px;top:457px;width:20px;text-align:right;font:400 14.5px/22px 'Liberation Mono', monospace;color:#aaaaaa;transform:scaleX(0.9195);transform-origin:100% 0">21</div>
<div style="position:absolute;left:364px;top:479px;width:20px;text-align:right;font:400 14.5px/22px 'Liberation Mono', monospace;color:#aaaaaa;transform:scaleX(0.9195);transform-origin:100% 0">22</div>
<div style="position:absolute;left:364px;top:501px;width:20px;text-align:right;font:400 14.5px/22px 'Liberation Mono', monospace;color:#aaaaaa;transform:scaleX(0.9195);transform-origin:100% 0">23</div>
<div style="position:absolute;left:364px;top:523px;width:20px;text-align:right;font:400 14.5px/22px 'Liberation Mono', monospace;color:#aaaaaa;transform:scaleX(0.9195);transform-origin:100% 0">24</div>
<div style="position:absolute;left:364px;top:545px;width:20px;text-align:right;font:400 14.5px/22px 'Liberation Mono', monospace;color:#aaaaaa;transform:scaleX(0.9195);transform-origin:100% 0">25</div>
<div style="position:absolute;left:364px;top:567px;width:20px;text-align:right;font:400 14.5px/22px 'Liberation Mono', monospace;color:#aaaaaa;transform:scaleX(0.9195);transform-origin:100% 0">26</div>
<div style="position:absolute;left:364px;top:589px;width:20px;text-align:right;font:400 14.5px/22px 'Liberation Mono', monospace;color:#aaaaaa;transform:scaleX(0.9195);transform-origin:100% 0">27</div>
<div style="position:absolute;left:364px;top:611px;width:20px;text-align:right;font:400 14.5px/22px 'Liberation Mono', monospace;color:#aaaaaa;transform:scaleX(0.9195);transform-origin:100% 0">28</div>
<div style="position:absolute;left:364px;top:633px;width:20px;text-align:right;font:400 14.5px/22px 'Liberation Mono', monospace;color:#aaaaaa;transform:scaleX(0.9195);transform-origin:100% 0">29</div>
<div style="position:absolute;left:364px;top:655px;width:20px;text-align:right;font:400 14.5px/22px 'Liberation Mono', monospace;color:#aaaaaa;transform:scaleX(0.9195);transform-origin:100% 0">30</div>
<div style="position:absolute;left:364px;top:677px;width:20px;text-align:right;font:400 14.5px/22px 'Liberation Mono', monospace;color:#aaaaaa;transform:scaleX(0.9195);transform-origin:100% 0">31</div>
<div style="position:absolute;left:428px;top:82px;font:400 14.5px/22px 'Liberation Mono', monospace;white-space:pre;transform:scaleX(0.9195);transform-origin:0 0"><span style="color:#7f8c00;font-weight:700">import</span><span style="color:#000"> </span><span style="color:#2f4fa0">Want</span><span style="color:#000"> </span><span style="color:#7f8c00;font-weight:700">from</span><span style="color:#000"> </span><span style="color:#7f3f88">&#x27;@ohos.app.ability.Want&#x27;</span><span style="color:#a09a00">;</span></div>
<div style="position:absolute;left:428px;top:104px;font:400 14.5px/22px 'Liberation Mono', monospace;white-space:pre;transform:scaleX(0.9195);transform-origin:0 0"></div>
<div style="position:absolute;left:428px;top:126px;font:400 14.5px/22px 'Liberation Mono', monospace;white-space:pre;transform:scaleX(0.9195);transform-origin:0 0"><span style="color:#9e880d">@Entry</span></div>
<div style="position:absolute;left:428px;top:148px;font:400 14.5px/22px 'Liberation Mono', monospace;white-space:pre;transform:scaleX(0.9195);transform-origin:0 0"><span style="color:#9e880d">@Component</span></div>
<div style="position:absolute;left:428px;top:170px;font:400 14.5px/22px 'Liberation Mono', monospace;white-space:pre;transform:scaleX(0.9195);transform-origin:0 0"><span style="color:#7f8c00;font-weight:700">struct</span><span style="color:#000"> </span><span style="color:#307f8f">Index</span><span style="color:#000"> </span><span style="color:#e06ccf">{</span></div>
<div style="position:absolute;left:428px;top:192px;font:400 14.5px/22px 'Liberation Mono', monospace;white-space:pre;transform:scaleX(0.9195);transform-origin:0 0"><span style="color:#000">  </span><span style="color:#9e880d">@State</span><span style="color:#000"> </span><span style="color:#2f4fa0">message</span><span style="color:#a09a00">:</span><span style="color:#000"> </span><span style="color:#1f2478">string</span><span style="color:#000"> </span><span style="color:#a09a00">=</span><span style="color:#000"> </span><span style="color:#7f3f88">&#x27;Hello World&#x27;</span><span style="color:#a09a00">;</span></div>
<div style="position:absolute;left:428px;top:214px;font:400 14.5px/22px 'Liberation Mono', monospace;white-space:pre;transform:scaleX(0.9195);transform-origin:0 0"><span style="color:#000">  </span><span style="color:#7f8c00;font-weight:700">private</span><span style="color:#000"> </span><span style="color:#2f4fa0">context</span><span style="color:#000"> </span><span style="color:#a09a00">=</span><span style="color:#000"> </span><span style="color:#1b9b9b">getContext</span><span style="color:#5c5cc8">(</span><span style="color:#7f8c00;font-weight:700">this</span><span style="color:#5c5cc8">)</span><span style="color:#000"> </span><span style="color:#7f8c00;font-weight:700">as</span><span style="color:#000"> </span><span style="color:#1f2478">common</span><span style="color:#a09a00">.</span><span style="color:#1b9b9b">UIAbilityContext</span><span style="color:#a09a00">;</span></div>
<div style="position:absolute;left:428px;top:236px;font:400 14.5px/22px 'Liberation Mono', monospace;white-space:pre;transform:scaleX(0.9195);transform-origin:0 0"></div>
<div style="position:absolute;left:428px;top:258px;font:400 14.5px/22px 'Liberation Mono', monospace;white-space:pre;transform:scaleX(0.9195);transform-origin:0 0"><span style="color:#000">  </span><span style="color:#1b9b9b">build</span><span style="color:#5c5cc8">()</span><span style="color:#000"> </span><span style="color:#e06ccf">{</span></div>
<div style="position:absolute;left:428px;top:280px;font:400 14.5px/22px 'Liberation Mono', monospace;white-space:pre;transform:scaleX(0.9195);transform-origin:0 0"><span style="color:#000">    </span><span style="color:#1b9b9b">Row</span><span style="color:#5c5cc8">()</span><span style="color:#000"> </span><span style="color:#e06ccf">{</span></div>
<div style="position:absolute;left:428px;top:302px;font:400 14.5px/22px 'Liberation Mono', monospace;white-space:pre;transform:scaleX(0.9195);transform-origin:0 0"><span style="color:#000">      </span><span style="color:#1b9b9b">Column</span><span style="color:#5c5cc8">()</span><span style="color:#000"> </span><span style="color:#e06ccf">{</span></div>
<div style="position:absolute;left:428px;top:324px;font:400 14.5px/22px 'Liberation Mono', monospace;white-space:pre;transform:scaleX(0.9195);transform-origin:0 0"><span style="color:#000">        </span><span style="color:#1b9b9b">Text</span><span style="color:#5c5cc8">(</span><span style="color:#7f3f88">&quot;</span><span style="color:#000">          </span><span style="color:#7f3f88">&quot;</span><span style="color:#5c5cc8">)</span></div>
<div style="position:absolute;left:428px;top:346px;font:400 14.5px/22px 'Liberation Mono', monospace;white-space:pre;transform:scaleX(0.9195);transform-origin:0 0"><span style="color:#000">          </span><span style="color:#a09a00">.</span><span style="color:#1b9b9b">fontSize</span><span style="color:#5c5cc8">(</span><span style="color:#f0895a">50</span><span style="color:#5c5cc8">)</span></div>
<div style="position:absolute;left:428px;top:368px;font:400 14.5px/22px 'Liberation Mono', monospace;white-space:pre;transform:scaleX(0.9195);transform-origin:0 0"><span style="color:#000">          </span><span style="color:#a09a00">.</span><span style="color:#1b9b9b">fontWeight</span><span style="color:#5c5cc8">(</span><span style="color:#1f2478">FontWeight</span><span style="color:#a09a00">.</span><span style="color:#1f2478">Bold</span><span style="color:#5c5cc8">)</span></div>
<div style="position:absolute;left:428px;top:390px;font:400 14.5px/22px 'Liberation Mono', monospace;white-space:pre;transform:scaleX(0.9195);transform-origin:0 0"><span style="color:#000">          </span><span style="color:#a09a00">.</span><span style="color:#1b9b9b">onClick</span><span style="color:#5c5cc8">(()</span><span style="color:#a09a00">=&gt;</span><span style="color:#e06ccf">{</span></div>
<div style="position:absolute;left:428px;top:412px;font:400 14.5px/22px 'Liberation Mono', monospace;white-space:pre;transform:scaleX(0.9195);transform-origin:0 0"><span style="color:#000">            </span><span style="color:#7f8c00;font-weight:700">let</span><span style="color:#000"> </span><span style="color:#2f4fa0">want</span><span style="color:#a09a00">:</span><span style="color:#1f2478">Want</span><span style="color:#000"> </span><span style="color:#a09a00">=</span><span style="color:#000"> </span><span style="color:#e06ccf">{</span></div>
<div style="position:absolute;left:428px;top:434px;font:400 14.5px/22px 'Liberation Mono', monospace;white-space:pre;transform:scaleX(0.9195);transform-origin:0 0"><span style="color:#000">              </span><span style="color:#2f4fa0">deviceId</span><span style="color:#a09a00">:</span><span style="color:#7f3f88">&#x27;&#x27;</span><span style="color:#a09a00">,</span></div>
<div style="position:absolute;left:428px;top:456px;font:400 14.5px/22px 'Liberation Mono', monospace;white-space:pre;transform:scaleX(0.9195);transform-origin:0 0"><span style="color:#000">              </span><span style="color:#2f4fa0">bundleName</span><span style="color:#a09a00">:</span><span style="color:#7f3f88">&quot;com.huawei.myapplication&quot;</span><span style="color:#a09a00">,</span></div>
<div style="position:absolute;left:428px;top:478px;font:400 14.5px/22px 'Liberation Mono', monospace;white-space:pre;transform:scaleX(0.9195);transform-origin:0 0"><span style="color:#000">              </span><span style="color:#2f4fa0">abilityName</span><span style="color:#a09a00">:</span><span style="color:#7f3f88">&quot;DocAbility&quot;</span><span style="color:#a09a00">,</span></div>
<div style="position:absolute;left:428px;top:500px;font:400 14.5px/22px 'Liberation Mono', monospace;white-space:pre;transform:scaleX(0.9195);transform-origin:0 0"><span style="color:#000">              </span><span style="color:#2f4fa0">parameters</span><span style="color:#000"> </span><span style="color:#a09a00">:</span><span style="color:#000"> </span><span style="color:#e06ccf">{</span></div>
<div style="position:absolute;left:428px;top:522px;font:400 14.5px/22px 'Liberation Mono', monospace;white-space:pre;transform:scaleX(0.9195);transform-origin:0 0"><span style="color:#000">                </span><span style="color:#2f4fa0">processKey</span><span style="color:#000"> </span><span style="color:#a09a00">:</span><span style="color:#000"> </span><span style="color:#7f3f88">&quot;DocAbility&quot;</span></div>
<div style="position:absolute;left:428px;top:544px;font:400 14.5px/22px 'Liberation Mono', monospace;white-space:pre;transform:scaleX(0.9195);transform-origin:0 0"><span style="color:#000">              </span><span style="color:#e06ccf">}</span></div>
<div style="position:absolute;left:428px;top:566px;font:400 14.5px/22px 'Liberation Mono', monospace;white-space:pre;transform:scaleX(0.9195);transform-origin:0 0"><span style="color:#000">            </span><span style="color:#e06ccf">}</span></div>
<div style="position:absolute;left:428px;top:588px;font:400 14.5px/22px 'Liberation Mono', monospace;white-space:pre;transform:scaleX(0.9195);transform-origin:0 0"><span style="color:#000">            </span><span style="color:#7f8c00;font-weight:700">this</span><span style="color:#a09a00">.</span><span style="color:#2f4fa0">context</span><span style="color:#a09a00">.</span><span style="color:#1b9b9b">startAbility</span><span style="color:#5c5cc8">(</span><span style="color:#2f4fa0">want</span><span style="color:#5c5cc8">)</span><span style="color:#a09a00">.</span><span style="color:#1b9b9b">catch</span><span style="color:#5c5cc8">((</span><span style="color:#2f4fa0">err</span><span style="color:#a09a00">:</span><span style="color:#1f2478">object</span><span style="color:#5c5cc8">)</span><span style="color:#a09a00">=&gt;</span><span style="color:#e06ccf">{</span></div>
<div style="position:absolute;left:428px;top:610px;font:400 14.5px/22px 'Liberation Mono', monospace;white-space:pre;transform:scaleX(0.9195);transform-origin:0 0"><span style="color:#000">              </span><span style="color:#2f4fa0">console</span><span style="color:#a09a00">.</span><span style="color:#1b9b9b">log</span><span style="color:#5c5cc8">(</span><span style="color:#1f2478">JSON</span><span style="color:#a09a00">.</span><span style="color:#1b9b9b">stringify</span><span style="color:#5c5cc8">(</span><span style="color:#2f4fa0">err</span><span style="color:#5c5cc8">))</span></div>
<div style="position:absolute;left:428px;top:632px;font:400 14.5px/22px 'Liberation Mono', monospace;white-space:pre;transform:scaleX(0.9195);transform-origin:0 0"><span style="color:#000">            </span><span style="color:#e06ccf">}</span><span style="color:#5c5cc8">)</span></div>
<div style="position:absolute;left:428px;top:654px;font:400 14.5px/22px 'Liberation Mono', monospace;white-space:pre;transform:scaleX(0.9195);transform-origin:0 0"><span style="color:#000">          </span><span style="color:#e06ccf">}</span><span style="color:#5c5cc8">)</span></div>
<div style="position:absolute;left:541px;top:326px;width:81px;height:21px;background:linear-gradient(90deg,#e6dce9,#eee8ef 50%,#e9e5eb);"></div>
<svg style="position:absolute;left:435px;top:146px" width="14" height="18"><circle cx="7" cy="6.5" r="5.3" fill="#f0a30a"/><rect x="4" y="11.5" width="6" height="4" fill="#fff"/><path d="M4.5 12.5 H9.5 M5 14.5 H9" stroke="#8a8a8a" stroke-width="1"/></svg>
<div style="position:absolute;left:517px;top:408px;width:451px;height:243px;border:2px solid #3434c4"></div>
<svg style="position:absolute;left:373px;top:60px" width="14" height="15" viewBox="0 0 14 15">
<path d="M2 3.8 L5.6 0.2 V3.8 Z" fill="#b4bdc4"/><rect x="7" y="0" width="5" height="6.6" fill="#aab4bc"/><rect x="2" y="4.8" width="10" height="1.8" fill="#aab4bc"/>
<rect x="0" y="8" width="14" height="7" fill="#7fcdec"/>
<text x="7" y="14" font-family="Liberation Sans" font-size="6.8" font-weight="700" fill="#2f3b44" text-anchor="middle">ETS</text></svg>
<div style="position:absolute;left:392px;top:59.65px;font:400 14px/17px 'Liberation Sans', sans-serif;color:#000;white-space:pre;transform:scaleX(0.9326);transform-origin:0 0;">Index.ets</div>
<svg style="position:absolute;left:451px;top:62px" width="10" height="10"><path d="M1 1 L9 9 M9 1 L1 9" stroke="#b0b0b0" stroke-width="1.1"/></svg>
</body></html>
